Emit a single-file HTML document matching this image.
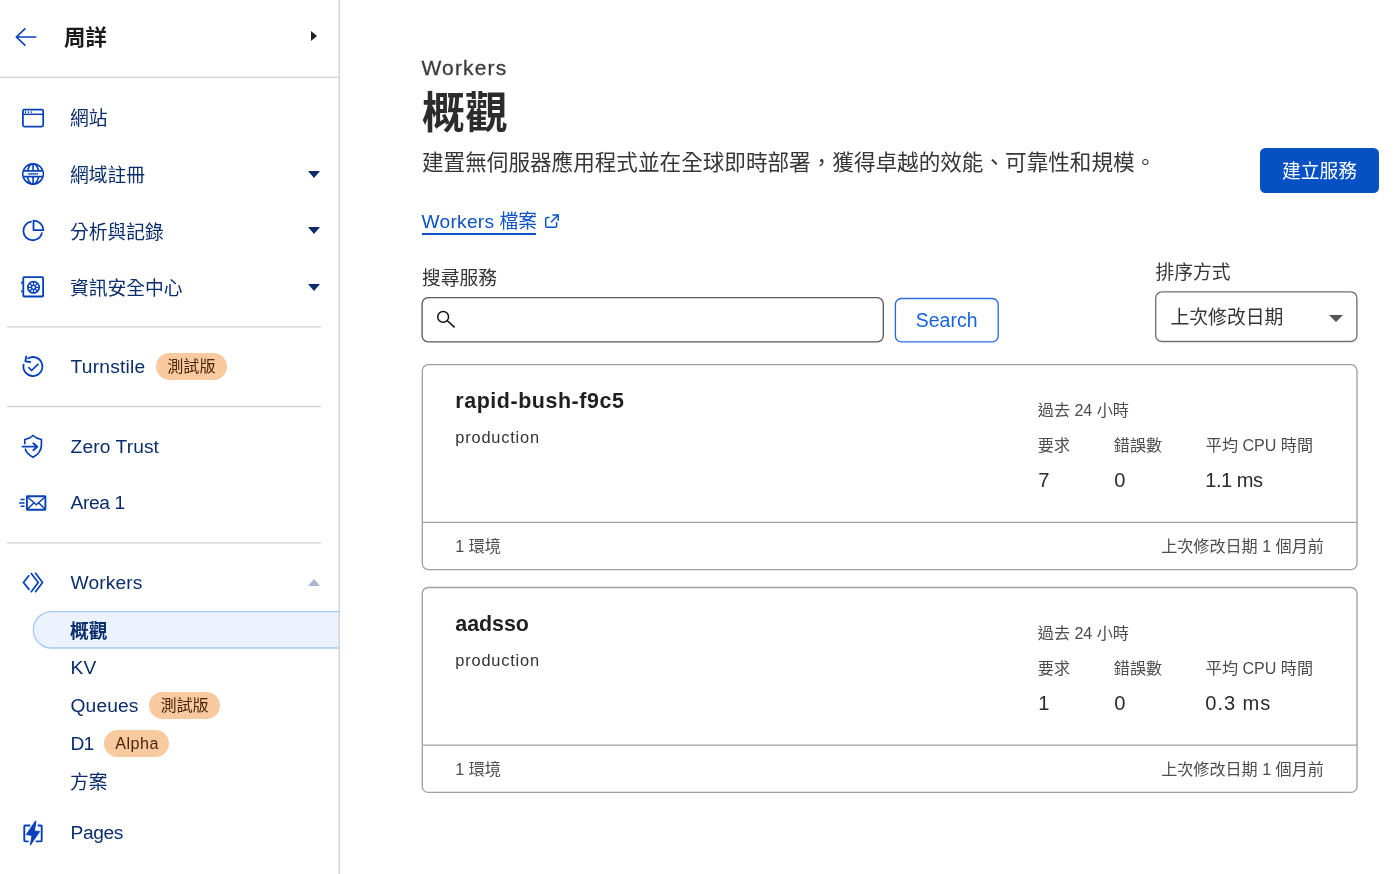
<!DOCTYPE html>
<html lang="zh-Hant">
<head>
<meta charset="utf-8">
<title>Workers 概觀</title>
<style>
*{box-sizing:border-box;margin:0;padding:0}
html,body{width:1400px;height:874px;overflow:hidden;background:#fff}
body{font-family:"Liberation Sans","Noto Sans CJK TC",sans-serif;color:#313131;position:relative}
.abs{position:absolute;white-space:nowrap}
#side,#main{will-change:transform}
/* sidebar */
#side{position:absolute;left:0;top:0;width:340px;height:874px;background:#fff;overflow:hidden}
#icons{position:absolute;left:0;top:0}
#hdr{position:absolute;left:0;top:0;width:339px;height:78px}
.nav{position:absolute;left:70px;font-size:18.76px;line-height:26px;color:#0a2d6b;white-space:nowrap}
.sub{position:absolute;left:70px;font-size:18.76px;line-height:26px;color:#0a2d6b;white-space:nowrap}
.lat{font-size:19.2px;letter-spacing:.1px;left:70.6px}
.hr{position:absolute;left:7px;width:314px;height:1px;background:#d5d5d5}
.ico{position:absolute;left:20px;width:26px;height:26px}
.caret{position:absolute;left:308px;width:0;height:0;border-left:6px solid transparent;border-right:6px solid transparent;border-top:7px solid #0a2d6b}
.badge{display:inline-block;background:#f9c9a0;color:#4a2508;border-radius:14px;font-size:16.08px;letter-spacing:0;line-height:26px;height:27px;padding:0 11px;margin-left:11px;vertical-align:middle;position:relative;top:-1px}
#pill{position:absolute;left:32.5px;top:611px;width:345px;height:38px;border:1.3px solid #a8c8f5;border-radius:19px;background:#ebf3fe}
/* main */
.card{position:absolute;left:422.8px;width:934px;height:205px}
.val{font-size:20.1px;line-height:30px;color:#2b2b2b}
.t16{font-size:21.44px;line-height:30px}
.t12{font-size:16.08px;line-height:22px}
.gray{color:#4d4d4d}
</style>
</head>
<body>
<div id="side">
  
  <svg id="icons" width="340" height="874" viewBox="0 0 340 874" fill="none" stroke="#0540ba" stroke-width="1.8" stroke-linecap="round" stroke-linejoin="round">
    <rect x="33.3" y="611.6" width="345" height="36.4" rx="18.2" fill="#edf3fe" stroke="#a7c9f8" stroke-width="1.340"/>
    <!-- rules -->
    <g stroke="#d2d2d2" stroke-linecap="butt">
      <path d="M0 77.4h339" stroke-width="1.200"/>
      <path d="M339.250 0v874" stroke-width="1.400"/>
      <path d="M7 326.900h314M7 406.500h314M7 542.800h314" stroke-width="1.300"/>
    </g>
    <!-- back arrow -->
    <path d="M36.3 37H16.400M25.4 28.3L16.400 37l9 8.6" stroke-width="1.600" stroke-linecap="butt" stroke-linejoin="miter"/>
    <!-- websites -->
    <rect x="22.9" y="109.7" width="20.300" height="16.800" rx="1.500" stroke-width="1.750"/>
    <path d="M23 114.300h20" stroke-width="1.500" stroke-linecap="butt"/>
    <path d="M25.500 111.300v1.600M28.400 111.300v1.600M31.300 111.300v1.600" stroke-width="1.100" stroke-linecap="butt"/>
    <!-- globe -->
    <circle cx="33.050" cy="173.950" r="10.200" stroke-width="1.700"/>
    <ellipse cx="33.050" cy="173.950" rx="5.800" ry="10.200" stroke-width="1.600"/>
    <path d="M33.050 163.800v20.300" stroke-width="1.600" stroke-linecap="butt"/>
    <rect x="23.700" y="170.900" width="18.700" height="5.800" fill="#fff" stroke="none"/>
    <path d="M23.300 170.900h19.500M23.300 176.700h19.500" stroke-width="1.700" stroke-linecap="butt"/>
    <path d="M28.200 173.900h10.200" stroke-width="1.600" stroke-dasharray="1.700 0.350" stroke-linecap="butt" opacity=".85"/>
    <!-- analytics pie -->
    <path d="M31 221.6a9.4 9.4 0 1 0 10.9 11.6"/>
    <path d="M33.5 220.6v9.5h9.9a9.8 9.8 0 0 0-9.9-9.5z"/>
    <!-- security safe -->
    <rect x="23.3" y="277.1" width="19.8" height="19.4" rx="0.8"/>
    <path d="M21.9 281.6v2.4M21.9 290.2v2.4" stroke-width="1.4" stroke-linecap="butt"/>
    <circle cx="33.5" cy="287.3" r="5.7" stroke-width="1.7"/>
    <circle cx="33.5" cy="287.3" r="2" stroke-width="1.3"/>
    <path d="M33.500 285.300L33.500 281.600M34.914 285.886L37.530 283.270M35.500 287.300L39.200 287.300M34.914 288.714L37.530 291.330M33.500 289.300L33.500 293.000M32.086 288.714L29.470 291.330M31.500 287.300L27.800 287.300M32.086 285.886L29.470 283.270" stroke-width="1.3" stroke-linecap="butt"/>
    <!-- turnstile -->
    <path d="M23.6 364.6a9.5 9.5 0 1 0 4.4-6.2" stroke-width="1.8"/>
    <path d="M26.3 356.4l-1 4.9 5 .7" stroke-width="1.8"/>
    <path d="M28.8 367.7l2.8 2.8 6.3-6.2" stroke-width="1.7"/>
    <!-- zero trust -->
    <path d="M24.8 443.6v-4.1c3.6-.5 6.200-1.900 8.300-4 2.100 2.100 4.700 3.500 8.300 4v5.500c0 5.300-3.100 9.500-8.300 12.300-4-2.100-6.700-4.900-7.800-8.100" stroke-width="1.7"/>
    <path d="M22.500 446.700h14.600M33.300 443.300l4 3.400-4 3.500" stroke-width="1.8"/>
    <!-- area 1 -->
    <rect x="26.900" y="496.300" width="18.500" height="13.400" rx="0.500" stroke-width="1.9"/>
    <path d="M27.300 496.800l9 8 9-8M27.300 509.300l6.500-6.300M45.300 509.300l-6.500-6.300" stroke-width="1.500" stroke-linecap="butt"/>
    <path d="M21.1 499.500h2.900M19.600 502.900h4.400M21.100 506.300h2.900" stroke-width="1.500"/>
    <!-- workers -->
    <path d="M29.200 575.300l-5.700 7.200 5.900 7.400M30.900 572.900l7.300 9.600-7.300 9.700M35.200 572.700l7.300 9.800-7.300 9.700" stroke-width="1.700" stroke-linecap="butt" stroke-linejoin="miter"/>
    <!-- pages -->
    <path d="M30.300 825.500h-5.200a.8.800 0 0 0-.8.800v14.300c0 .5.400.8.800.8h3.500M37.700 825.500h3.200c.5 0 .8.400.8.800v14.300c0 .5-.4.800-.8.800h-5.200" stroke-width="1.900" stroke-linecap="butt"/>
    <path d="M35.200 821.400l-8.900 13.200 5.700.9-1.700 9.700 9.400-13.700-5.400-.6 1.700-9.200z" fill="#0540ba" stroke-width="0.900"/>
  </svg>
  <div id="hdr">
    
    <div class="abs" style="left:64px;top:22px;font-size:21.44px;line-height:32px;font-weight:700;color:#1a1a1a">周詳</div>
    <div class="abs" style="left:310.800px;top:31.200px;width:0;height:0;border-top:5.8px solid transparent;border-bottom:5.8px solid transparent;border-left:6.800px solid #222"></div>
  </div>

  <div class="nav" style="top:106px">網站</div>
  <div class="nav" style="top:163px">網域註冊</div><div class="caret" style="top:171px"></div>
  <div class="nav" style="top:219.5px">分析與記錄</div><div class="caret" style="top:227px"></div>
  <div class="nav" style="top:276px">資訊安全中心</div><div class="caret" style="top:284px"></div>
  <div class="nav lat" style="top:354px;letter-spacing:.2px">Turnstile<span class="badge">測試版</span></div>
  <div class="nav lat" style="top:434px">Zero Trust</div>
  <div class="nav lat" style="top:490px;letter-spacing:-.4px">Area 1</div>
  <div class="nav lat" style="top:570px">Workers</div>
  <div class="abs" style="left:308px;top:579px;width:0;height:0;border-left:6px solid transparent;border-right:6px solid transparent;border-bottom:7px solid #a9b6cf"></div>
  <div class="sub" style="top:618.5px;font-weight:700">概觀</div>
  <div class="sub lat" style="top:655px">KV</div>
  <div class="sub lat" style="top:693px">Queues<span class="badge">測試版</span></div>
  <div class="sub lat" style="top:731px;letter-spacing:-.9px">D1<span class="badge" style="letter-spacing:.5px;padding:0 10.5px 0 11px">Alpha</span></div>
  <div class="sub" style="top:770px">方案</div>
  <div class="nav lat" style="top:820px;letter-spacing:-.4px">Pages</div>
</div>

<div id="main">
  <svg id="lines" class="abs" style="left:0;top:0" width="1400" height="874" viewBox="0 0 1400 874" fill="none" stroke-width="1.34">
    <rect x="422.1" y="297.7" width="461.2" height="44.1" rx="6" stroke="#5a5a5a"/>
    <rect x="895.4" y="298.5" width="102.8" height="43.4" rx="6" stroke="#2a6de0"/>
    <rect x="1155.7" y="291.9" width="201.200" height="49.6" rx="6" stroke="#707070"/>
    <g stroke="#a0a0a0">
      <rect x="422.3" y="364.7" width="934.7" height="204.9" rx="6"/>
      <path d="M422.3 522.3h934.7"/>
      <rect x="422.3" y="587.5" width="934.7" height="204.900" rx="6"/>
      <path d="M422.3 745.1h934.7"/>
    </g>
  </svg>
  <div class="abs" style="left:421.5px;top:53.5px;font-size:21px;line-height:28px;letter-spacing:1.15px;color:#3a3a3a;-webkit-text-stroke:.3px #3a3a3a">Workers</div>
  <div class="abs" style="left:422px;top:83.5px;font-size:42.9px;line-height:58px;font-weight:700;color:#2c2c2c">概觀</div>
  <div class="abs" style="left:422px;top:147px;font-size:21.6px;line-height:32px;color:#363636">建置無伺服器應用程式並在全球即時部署，獲得卓越的效能、可靠性和規模。</div>
  <div class="abs" style="left:1260px;top:148px;width:119px;height:45px;background:#0551c4;border-radius:5.5px;color:#fff;font-size:18.76px;line-height:48px;text-align:center">建立服務</div>
  <div class="abs" style="left:421.5px;top:207.5px;font-size:18.76px;line-height:28px;color:#0b52c6"><span style="font-size:19.2px;letter-spacing:.25px">Workers</span> 檔案</div>
  <div class="abs" style="left:421.5px;top:233px;width:114.5px;height:2px;background:#0b52c6"></div>
  <svg class="abs" style="left:543px;top:212px" width="18" height="18" viewBox="543 212 18 18" fill="none" stroke="#0b52c6" stroke-width="1.5"><path d="M549.6 217.6h-2.600a1.300 1.300 0 0 0-1.300 1.300v7c0 .7.600 1.300 1.300 1.300h8.300c.7 0 1.300-.6 1.300-1.300v-3.900M552.400 215h5.800v5.800M558 215.200l-7 7"/></svg>
  <div class="abs" style="left:422px;top:264.5px;font-size:18.76px;line-height:28px;color:#363636">搜尋服務</div>
    <svg class="abs" style="left:435px;top:309px" width="24" height="22" viewBox="435 309 24 22" fill="none" stroke="#111" stroke-width="1.5"><circle cx="443.15" cy="316.9" r="5.4"/><path d="M447.1 320.5l7.5 6.800" stroke-width="1.6"/></svg>
  <div class="abs" style="left:894.7px;top:297.8px;width:104.1px;height:44.7px;color:#1763dc;font-size:19.4px;line-height:44.7px;text-align:center;letter-spacing:.1px">Search</div>
  <div class="abs" style="left:1155.5px;top:258.7px;font-size:18.76px;line-height:28px;color:#363636">排序方式</div>
  <div class="abs" style="left:1155px;top:292.5px;width:202.500px;height:51.5px;font-size:18.85px;line-height:50px;padding-left:15.4px;color:#363636">上次修改日期</div>
  <div class="abs" style="left:1329px;top:314.500px;width:0;height:0;border-left:7px solid transparent;border-right:7px solid transparent;border-top:7.500px solid #555"></div>

  <div class="card" style="top:365.7px">
    <div class="abs t16" style="left:32.5px;top:20.5px;font-weight:700;color:#1f1f1f;letter-spacing:0.55px">rapid-bush-f9c5</div>
    <div class="abs" style="color:#333;left:32.5px;top:60px;font-size:16.4px;line-height:22px;letter-spacing:.8px">production</div>
    <div class="abs t12 gray" style="left:615px;top:33.5px">過去 24 小時</div>
    <div class="abs t12 gray" style="left:615px;top:68.5px">要求</div>
    <div class="abs t12 gray" style="left:691px;top:68.5px">錯誤數</div>
    <div class="abs t12 gray" style="left:783px;top:68.5px">平均 CPU 時間</div>
    <div class="abs val" style="left:615.5px;top:99px">7</div>
    <div class="abs val" style="left:691.5px;top:99px">0</div>
    <div class="abs val" style="left:782.5px;top:99px;letter-spacing:-.5px">1.1 ms</div>
    <div class="abs t12 gray" style="left:32.5px;top:169.5px">1 環境</div>
    <div class="abs t12 gray" style="right:33px;top:169.5px">上次修改日期 1 個月前</div>
  </div>
  <div class="card" style="top:588.5px">
    <div class="abs t16" style="left:32.5px;top:20.5px;font-weight:700;color:#1f1f1f;letter-spacing:-.05px">aadsso</div>
    <div class="abs" style="color:#333;left:32.5px;top:60px;font-size:16.4px;line-height:22px;letter-spacing:.8px">production</div>
    <div class="abs t12 gray" style="left:615px;top:33.5px">過去 24 小時</div>
    <div class="abs t12 gray" style="left:615px;top:68.5px">要求</div>
    <div class="abs t12 gray" style="left:691px;top:68.5px">錯誤數</div>
    <div class="abs t12 gray" style="left:783px;top:68.5px">平均 CPU 時間</div>
    <div class="abs val" style="left:615.5px;top:99px">1</div>
    <div class="abs val" style="left:691.5px;top:99px">0</div>
    <div class="abs val" style="left:782.5px;top:99px;letter-spacing:.95px">0.3 ms</div>
    <div class="abs t12 gray" style="left:32.5px;top:169.5px">1 環境</div>
    <div class="abs t12 gray" style="right:33px;top:169.5px">上次修改日期 1 個月前</div>
  </div>
</div>
</body>
</html>
